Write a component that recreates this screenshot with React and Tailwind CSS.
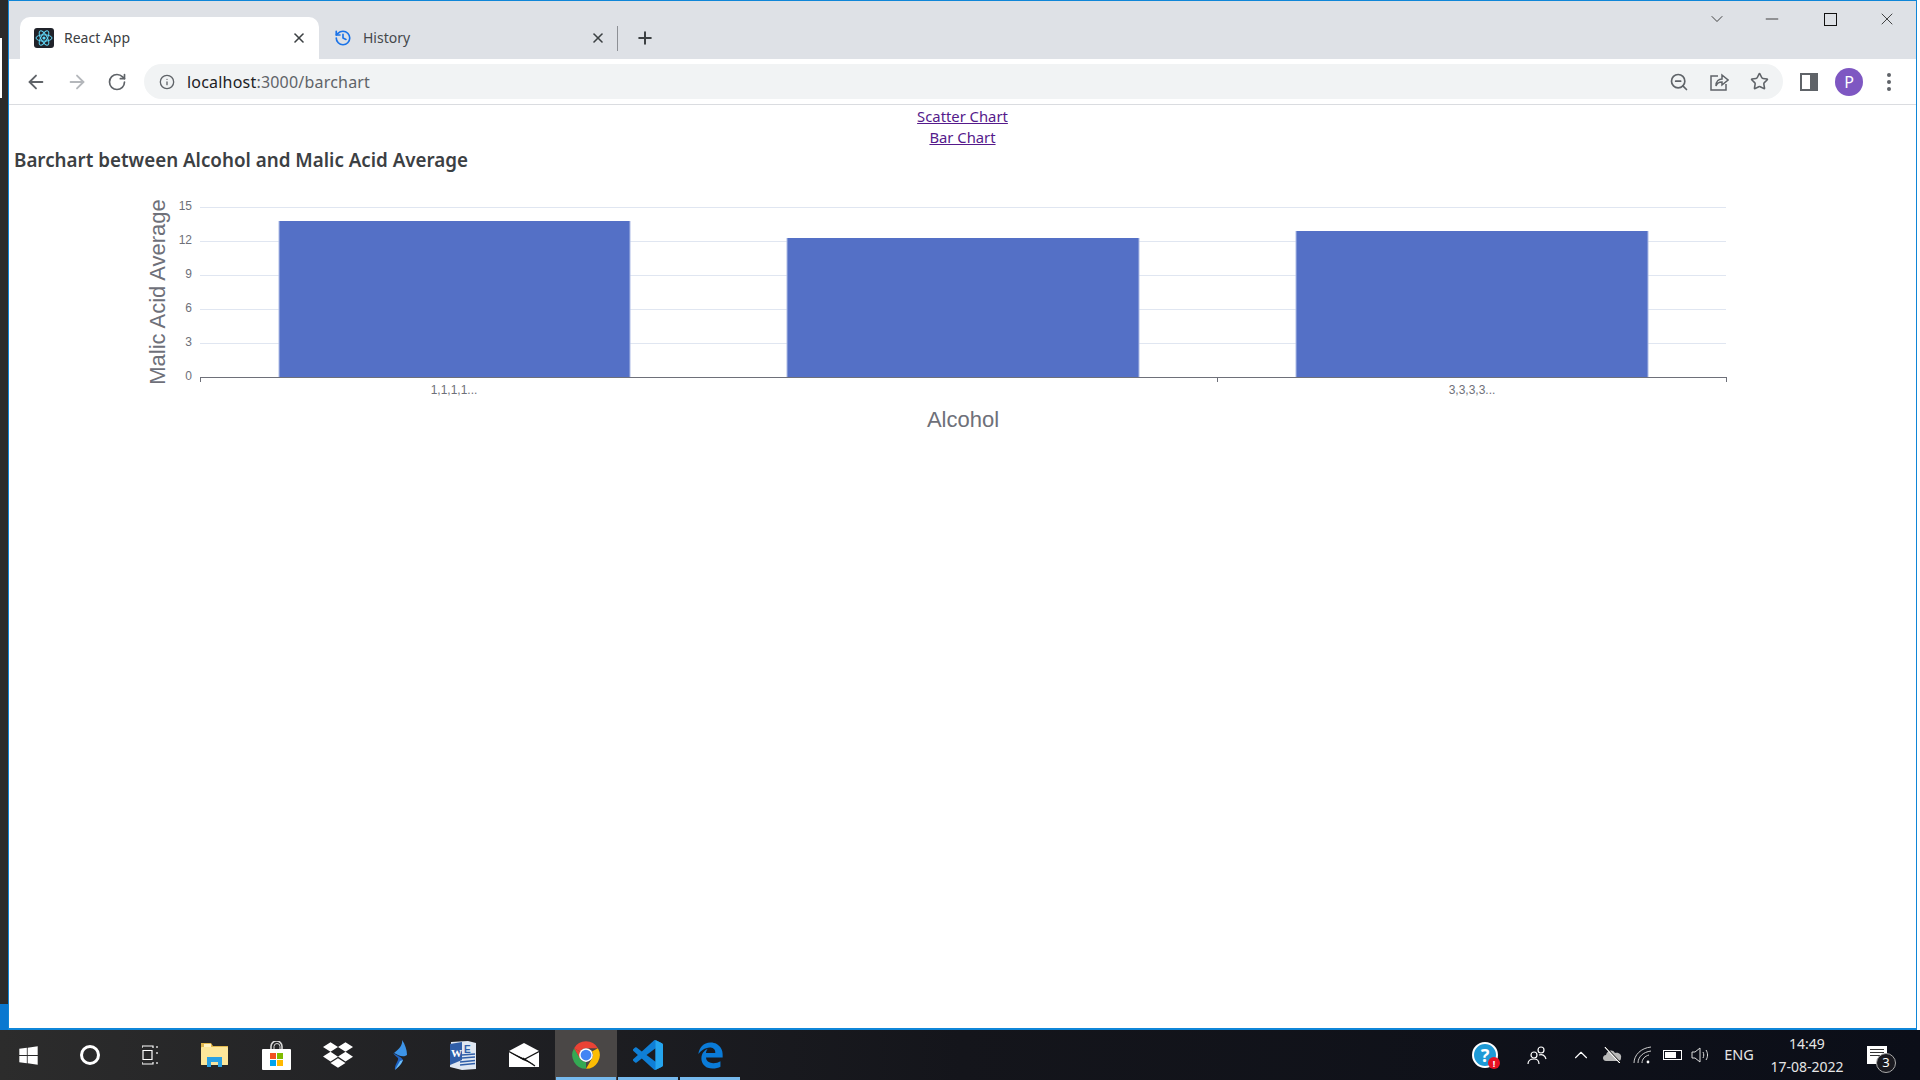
import React from "react";
import { ArrowLeft, ArrowRight, RotateCw, History, X, Plus, ZoomOut, Star, Minus, ChevronDown, Info, ChevronUp } from "lucide-react";
import { FaWindows, FaDropbox, FaEdgeLegacy } from "react-icons/fa6";

const UI = { fontFamily: '"Noto Sans", "Open Sans", sans-serif' };

function ReactLogo() {
  return (
    <svg width="20" height="20" viewBox="0 0 20 20">
      <rect width="20" height="20" rx="3" fill="#20232a" />
      <g fill="none" stroke="#61dafb" strokeWidth="1">
        <ellipse cx="10" cy="10" rx="8" ry="3.2" />
        <ellipse cx="10" cy="10" rx="8" ry="3.2" transform="rotate(60 10 10)" />
        <ellipse cx="10" cy="10" rx="8" ry="3.2" transform="rotate(120 10 10)" />
      </g>
      <circle cx="10" cy="10" r="1.6" fill="#61dafb" />
    </svg>
  );
}

function ChromeLogo() {
  return (
    <svg width="30" height="30" viewBox="0 0 24 24">
      <path fill="#ea4335" d="M2.47 6.5A11 11 0 0 1 21.53 6.5L12 6.5A5.5 5.5 0 0 0 7.24 9.25Z" />
      <path fill="#fbbc04" d="M21.53 6.5A11 11 0 0 1 12 23L16.76 14.75A5.5 5.5 0 0 0 16.76 9.25Z" />
      <path fill="#34a853" d="M12 23A11 11 0 0 1 2.47 6.5L7.24 14.75A5.5 5.5 0 0 0 12 17.5Z" />
      <path fill="#ea4335" d="M2.47 6.5L7.24 9.25L7.24 14.75Z" />
      <circle cx="12" cy="12" r="5.5" fill="#fff" />
      <circle cx="12" cy="12" r="4.3" fill="#4285f4" />
    </svg>
  );
}

function VSCode() {
  return (
    <svg width="30" height="30" viewBox="0 0 24 24">
      <path fill="#0f7fd6" d="M23.15 2.587L18.21.21a1.494 1.494 0 0 0-1.705.29l-9.46 8.63-4.12-3.128a.999.999 0 0 0-1.276.057L.327 7.261A1 1 0 0 0 .326 8.74L3.899 12 .326 15.26a1 1 0 0 0 .001 1.479L1.65 17.94a.999.999 0 0 0 1.276.057l4.12-3.128 9.46 8.63a1.492 1.492 0 0 0 1.704.29l4.942-2.377A1.5 1.5 0 0 0 24 20.06V3.939a1.5 1.5 0 0 0-.85-1.352zm-5.146 14.861L10.826 12l7.178-5.448v10.896z" />
      <path fill="#25a5ee" d="M18 0.1L18.21.21l4.94 2.377A1.5 1.5 0 0 1 24 3.94v16.12a1.5 1.5 0 0 1-.85 1.352l-4.94 2.377L18 23.9z" />
    </svg>
  );
}

function Folder() {
  return (
    <svg width="27" height="24" viewBox="0 0 27 24">
      <path fill="#e2b84e" d="M0 0h10l2 3h15v19H0z" />
      <rect x="0" y="4" width="27" height="18" rx="1" fill="#fde79a" />
      <rect x="3" y="1" width="7" height="3" fill="#fff3c4" />
      <path fill="#29a1e4" d="M6 14h15v10h-4v-5h-7v5H6z" />
      <rect x="10" y="19" width="7" height="3" fill="#f8e4a0" />
    </svg>
  );
}

function Store() {
  return (
    <svg width="29" height="29" viewBox="0 0 29 29">
      <path d="M9 9V5.5a5.5 5.5 0 0 1 11 0V9" fill="none" stroke="#d8d8d8" strokeWidth="1.6" />
      <path d="M12 9V5.5a3 3 0 0 1 6 0V9" fill="none" stroke="#d8d8d8" strokeWidth="1" />
      <rect x="0" y="8" width="29" height="21" rx="1" fill="#fff" />
      <rect x="8" y="12" width="6" height="6" fill="#f25022" />
      <rect x="15" y="12" width="6" height="6" fill="#7fba00" />
      <rect x="8" y="19" width="6" height="6" fill="#00a4ef" />
      <rect x="15" y="19" width="6" height="6" fill="#ffb900" />
    </svg>
  );
}

function Swift() {
  return (
    <svg width="16" height="30" viewBox="0 0 16 30">
      <path fill="#3d94e8" d="M10 0C11 5 7 9 2 13C6 15 11 18 15 15C15 10 13 4 10 0Z" />
      <path fill="#1e62c4" d="M1 13C4 15 10 17 11 20C10 24 6 27 3 30C2 25 7 21 6 18C4 16 2 15 1 13Z" />
      <path fill="#6fc0f5" d="M3 30C5 26 7 23 8 21L11 20C9 25 5 28 3 30Z" />
    </svg>
  );
}

function Word() {
  return (
    <svg width="29" height="29" viewBox="0 0 29 29">
      <path fill="#dfe7f2" d="M3 1L20 0L28 2V28L14 29L2 26Z" />
      <path fill="#2f5ea8" d="M2 3L14 1V19L2 24Z" />
      <text x="3" y="16" fontSize="11" fontWeight="700" fontFamily="Liberation Serif, serif" fill="#fff">W</text>
      <text x="16" y="12" fontSize="10" fontWeight="700" fontFamily="Liberation Sans, sans-serif" fill="#2f5ea8">E</text>
      <path stroke="#2f5ea8" strokeWidth="1.6" d="M12 21L27 19.5M12 24L27 22.5M14 14L27 13M14 17L27 16" />
    </svg>
  );
}

function Mail() {
  return (
    <svg width="30" height="24" viewBox="0 0 30 24">
      <path fill="#fff" d="M15 0L30 8V24H0V8Z" />
      <path fill="#111" d="M0 9L14 17L26 22L14 15Z" />
      <path stroke="#111" strokeWidth="1.2" d="M0 8.5L15 16.5L30 8.5M14 15L26 23" fill="none" />
    </svg>
  );
}

function Tb({ children, active, line }) {
  return (
    <div className={`relative flex h-full w-[62px] shrink-0 items-center justify-center ${active ? "bg-[#4a4746]" : ""}`}>
      {children}
      {line && <div className="absolute bottom-0 left-px right-px h-[3px] bg-[#76b9ed]" />}
    </div>
  );
}

function Chart() {
  const grid = [207, 241, 275, 309, 343];
  const yl = [[206, "15"], [240, "12"], [274, "9"], [308, "6"], [342, "3"], [376, "0"]];
  const bars = [[279, 221, 351], [787, 238, 352], [1296, 231, 352]];
  const f = "Liberation Sans, Arial, sans-serif";
  return (
    <svg width="1908" height="272" viewBox="9 173 1908 272" className="block">
      {grid.map((y) => (
        <line key={y} x1="200" x2="1726" y1={y + 0.5} y2={y + 0.5} stroke="#e0e6f1" strokeWidth="1" />
      ))}
      {bars.map(([x, y, w]) => (
        <g key={x}>
          <rect x={x} y={y} width={w} height={377 - y} fill="#5470c6" />
          <rect x={x - 0.5} y={y} width="1" height={377 - y} fill="#aebbe6" />
          <rect x={x + w - 0.5} y={y} width="1" height={377 - y} fill="#aebbe6" />
        </g>
      ))}
      <line x1="200" x2="1726.5" y1="377.5" y2="377.5" stroke="#6e7079" />
      {[200, 1217, 1726].map((x) => (
        <line key={x} x1={x + 0.5} x2={x + 0.5} y1="377" y2="382" stroke="#6e7079" />
      ))}
      {yl.map(([y, t]) => (
        <text key={t} x="192" y={y + 4} textAnchor="end" fontSize="12" fontFamily={f} fill="#6e7079">{t}</text>
      ))}
      <text x="454" y="394" textAnchor="middle" fontSize="12" fontFamily={f} fill="#6e7079">1,1,1,1...</text>
      <text x="1472" y="394" textAnchor="middle" fontSize="12" fontFamily={f} fill="#6e7079">3,3,3,3...</text>
      <text x="963" y="427" textAnchor="middle" fontSize="22" fontFamily={f} fill="#6e7079">Alcohol</text>
      <text transform="translate(165 292) rotate(-90)" textAnchor="middle" fontSize="22" fontFamily={f} fill="#6e7079">Malic Acid Average</text>
    </svg>
  );
}

export default function App() {
  return (
    <div className="flex h-screen w-full flex-col overflow-hidden bg-white" style={UI}>
      <div className="flex min-h-0 flex-1">
        <div className="flex w-2 flex-col bg-[#2b2b2b]">
          <div className="mt-[38px] h-[60px] w-0.5 bg-white" />
          <div className="mt-auto h-[26px] w-full bg-[#0a78d0]" />
        </div>
        <div className="flex min-w-0 flex-1 flex-col border border-b-2 border-[#0f86d8]">
          <div className="flex h-[58px] shrink-0 items-end bg-[#dee1e6] pl-[11px]">
            <div className="flex h-[42px] w-[299px] items-center rounded-t-[10px] bg-white pl-[14px] pr-[12px]">
              <ReactLogo />
              <span className="mb-[2px] ml-[10px] flex-1 text-[14px] text-[#3c4043]">React App</span>
              <X size={16} strokeWidth={2.4} className="text-[#3c4043]" />
            </div>
            <div className="flex h-[42px] w-[298px] items-center pl-[15px] pr-[11px]">
              <History size={18} strokeWidth={2.2} className="text-[#1a73e8]" />
              <span className="mb-[2px] ml-[11px] flex-1 text-[14px] text-[#45484c]">History</span>
              <X size={16} strokeWidth={2.4} className="text-[#3c4043]" />
            </div>
            <div className="mb-[8px] h-[25px] w-px bg-[#8d9095]" />
            <Plus size={20} strokeWidth={2.4} className="mb-[11px] ml-[17px] text-[#3c4043]" />
            <div className="flex-1" />
            <div className="mb-[22px] flex h-[36px] items-center self-start text-[#222]">
              <ChevronDown size={20} strokeWidth={1} className="mr-[35px]" />
              <Minus size={20} strokeWidth={1} className="mr-[42px]" />
              <div className="mr-[40px] h-[13px] w-[13px] border border-[#111]" />
              <X size={20} strokeWidth={1} className="mr-[19px]" />
            </div>
          </div>
          <div className="flex h-[46px] shrink-0 items-center border-b border-[#dadce0] bg-white">
            <ArrowLeft size={22} strokeWidth={2} className="ml-[16px] text-[#5f6368]" />
            <ArrowRight size={22} strokeWidth={2} className="ml-[19px] text-[#b4b7bb]" />
            <RotateCw size={20} strokeWidth={2} className="ml-[19px] text-[#5f6368]" />
            <div className="ml-[17px] flex h-[35px] w-[1639px] items-center rounded-full bg-[#f1f3f4] pl-[15px]">
              <Info size={16} strokeWidth={2} className="text-[#5f6368]" />
              <span className="ml-[12px] flex-1 text-[16px] tracking-[0.2px] text-[#5f6368]">
                <span className="text-[#202124]">localhost</span>:3000/barchart
              </span>
              <ZoomOut size={20} strokeWidth={2} className="mr-[20px] text-[#5f6368]" />
              <svg width="20" height="20" viewBox="0 0 20 20" fill="none" stroke="#5f6368" strokeWidth="1.5" className="mr-[21px]">
                <path d="M9 4H2V18H17V12" />
                <path d="M7 14C7 9 10 7 13 7V3L19 8L13 13V10C10 10 8 11 7 14Z" />
              </svg>
              <Star size={19} strokeWidth={2} className="mr-[14px] text-[#5f6368]" />
            </div>
            <div className="ml-[17px] flex h-[18px] w-[18px] border-2 border-[#5f6368] bg-white">
              <div className="ml-auto w-[6px] bg-[#5f6368]" />
            </div>
            <div className="ml-[17px] flex h-[28px] w-[28px] items-center justify-center rounded-full bg-[#7e57c2] text-[16px] text-white">P</div>
            <div className="ml-[24px] flex flex-col gap-[3px]">
              <div className="h-[4px] w-[4px] rounded-full bg-[#5f6368]" />
              <div className="h-[4px] w-[4px] rounded-full bg-[#5f6368]" />
              <div className="h-[4px] w-[4px] rounded-full bg-[#5f6368]" />
            </div>
          </div>
          <div className="min-h-0 flex-1 bg-white">
            <div className="pt-[1px] text-center text-[14.8px] leading-[21px] text-[#551a8b]">
              <div><a className="underline" href="#scatter">Scatter Chart</a></div>
              <div><a className="underline" href="#bar">Bar Chart</a></div>
            </div>
            <h3 className="pl-[5px] text-[18.8px] leading-[25px] font-semibold text-[#3c4043]">Barchart between Alcohol and Malic Acid Average</h3>
            <Chart />
          </div>
        </div>
        <div className="w-[3px] bg-white" />
      </div>
      <div className="flex h-[50px] shrink-0 items-center bg-gradient-to-r from-[#2c2c2c] via-[#14151b] to-[#0b0e18] pr-[33px] text-white">
        <div className="-ml-[3px] flex h-full">
          <Tb><FaWindows size={21} /></Tb>
          <Tb><div className="h-[20px] w-[20px] rounded-full border-[3px] border-white" /></Tb>
          <Tb>
            <svg width="20" height="20" viewBox="0 0 20 20" fill="none" stroke="#fff" strokeWidth="1.2">
              <path d="M0 3V1H11V3M0 17V19H11V17M1 5.5H10V14.5H1ZM15 1V3M15 7V9M15 17V19" />
            </svg>
          </Tb>
          <Tb><Folder /></Tb>
          <Tb><Store /></Tb>
          <Tb><FaDropbox size={30} /></Tb>
          <Tb><Swift /></Tb>
          <Tb><Word /></Tb>
          <Tb><Mail /></Tb>
          <Tb active line><ChromeLogo /></Tb>
          <Tb line><VSCode /></Tb>
          <Tb line><FaEdgeLegacy size={27} className="text-[#0a7bd8]" /></Tb>
        </div>
        <div className="flex-1" />
        <div className="flex h-full items-center">
          <div className="relative mr-[29px] flex h-[26px] w-[26px] items-center justify-center rounded-full border-2 border-white bg-[#1e9ad6] text-[18px] font-bold text-white">
            ?
            <div className="absolute -bottom-[3px] -right-[4px] flex h-[12px] w-[12px] items-center justify-center rounded-full bg-[#e81123] text-[9px] leading-none">!</div>
          </div>
          <svg width="20" height="20" viewBox="0 0 20 20" fill="none" stroke="#fff" strokeWidth="1.2" className="mr-[23px]">
            <circle cx="7" cy="10" r="3" /><circle cx="14" cy="5" r="3" />
            <path d="M1 19C1 15 4 14 7 14C10 14 12 16 12 19M12 10C15 9 18 10 19 14" />
          </svg>
          <ChevronUp size={22} strokeWidth={1.2} className="mr-[10px]" />
          <svg width="20" height="16" viewBox="0 0 20 16" className="mr-[11px]">
            <path fill="#b8b8b8" d="M4 14C0 14 0 8 4 8C5 3 11 2 13 6C17 5 20 8 19 11C19 13 18 14 16 14Z" />
            <path stroke="#fff" strokeWidth="1.4" d="M3 0L18 16" />
            <path stroke="#111" strokeWidth="1" d="M4 0L19 16" />
          </svg>
          <svg width="20" height="18" viewBox="0 0 20 18" fill="none" stroke="#ccc" strokeWidth="1" className="mr-[10px]">
            <path d="M1 17C1 9 8 2 18 1M5 17C5 11 10 6 18 5M9 17C9 13 12 10 16 9" />
            <circle cx="15" cy="16" r="1.4" fill="#fff" stroke="none" />
          </svg>
          <div className="mr-[9px] flex h-[10px] w-[19px] border border-white p-px">
            <div className="h-full w-[11px] bg-white" />
          </div>
          <svg width="20" height="16" viewBox="0 0 20 16" fill="none" stroke="#ddd" strokeWidth="1" className="mr-[13px]">
            <path d="M1 5H4L9 1V15L4 11H1Z" />
            <path d="M12 5C13 7 13 9 12 11M15 3C17 6 17 10 15 13" />
          </svg>
          <div className="mr-[13px] w-[30px] text-center text-[14.5px] text-[#e6e6e6]">ENG</div>
          <div className="w-[80px] whitespace-nowrap text-center text-[14px] leading-[23px] text-[#e6e6e6]">
            <div>14:49</div>
            <div>17-08-2022</div>
          </div>
          <div className="relative ml-[20px] h-[18px] w-[20px] bg-white">
            <div className="mx-[3px] mt-[3px] h-px bg-[#333]" />
            <div className="mx-[3px] mt-[2px] h-px bg-[#333]" />
            <div className="mx-[3px] mt-[2px] h-px bg-[#333]" />
            <div className="absolute -bottom-[9px] -right-[9px] flex h-[20px] w-[20px] items-center justify-center rounded-full border border-[#aaa] bg-[#1a1a20] text-[13px] text-white">3</div>
          </div>
        </div>
      </div>
    </div>
  );
}
